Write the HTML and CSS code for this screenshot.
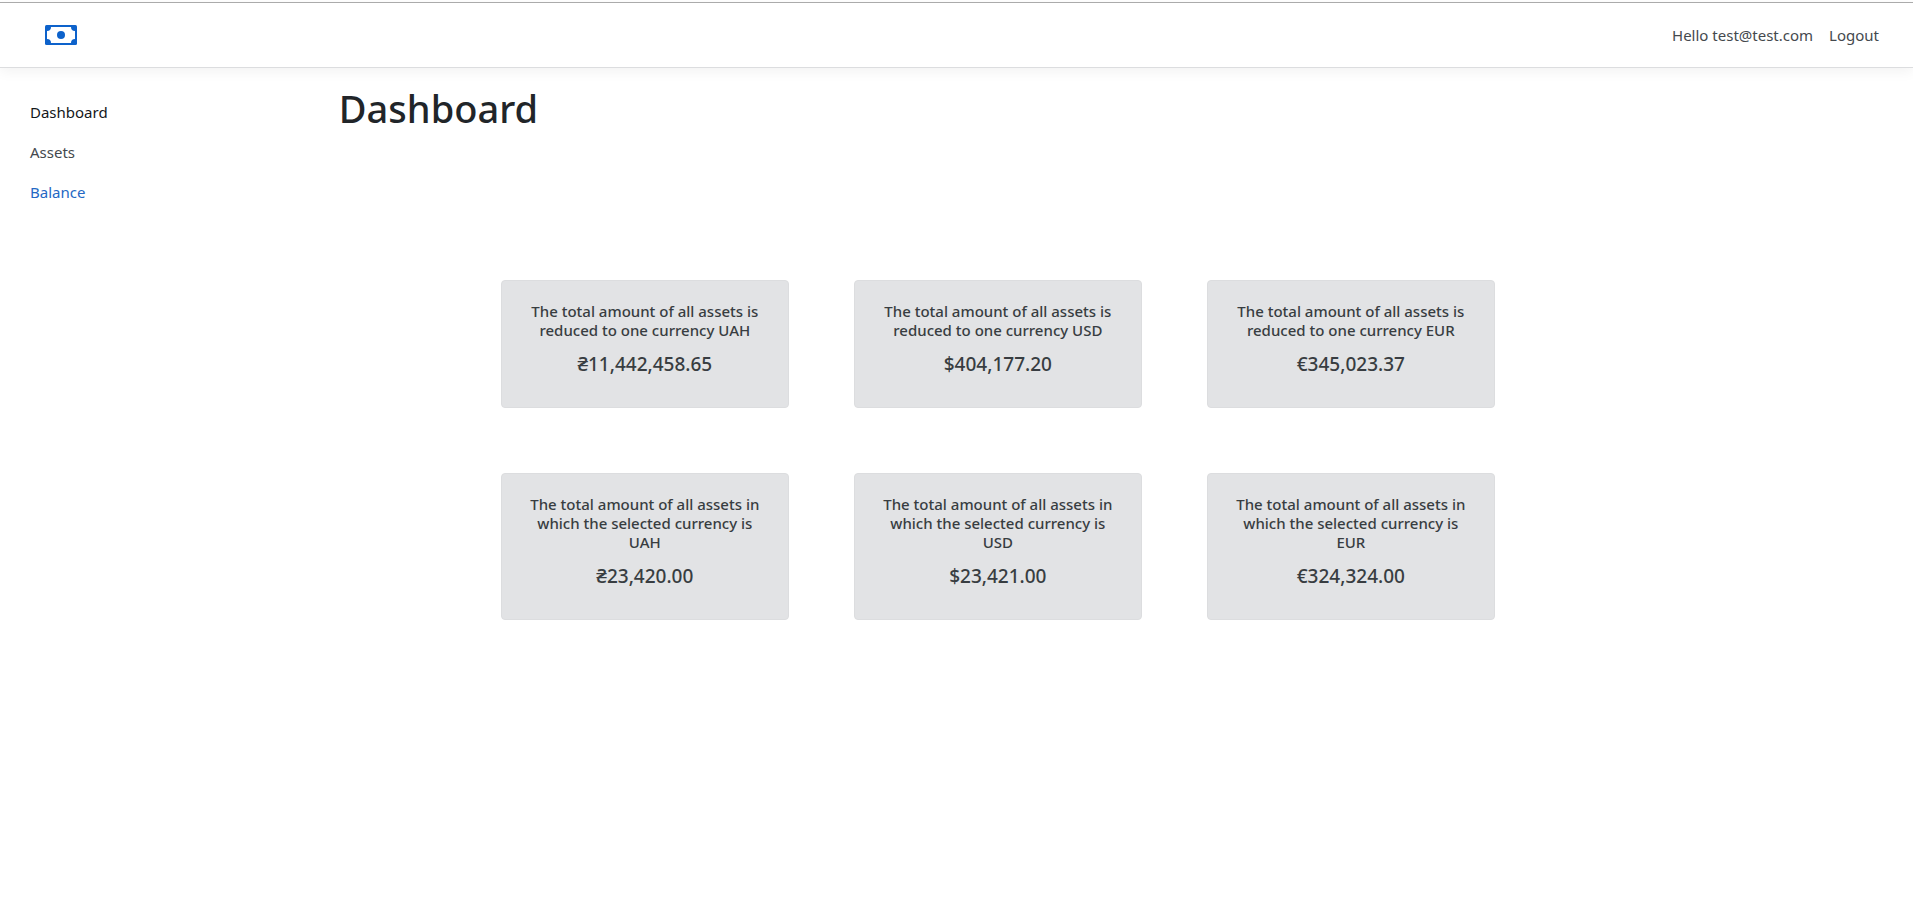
FILE: index.html
```html
<!DOCTYPE html>
<html lang="en">
<head>
<meta charset="utf-8">
<meta name="viewport" content="width=device-width, initial-scale=1">
<title>Dashboard</title>
<link rel="stylesheet" href="styles.css">
</head>
<body>
<header class="topbar">
  <a class="brand" href="#" aria-label="Home">
    <svg class="brand-icon" viewBox="0 0 32 20" aria-hidden="true">
      <rect width="32" height="20" rx="1.5" fill="#0d62cb"/>
      <path d="M6 2h20a4 4 0 0 0 4 4v8a4 4 0 0 0-4 4H6a4 4 0 0 0-4-4V6a4 4 0 0 0 4-4z" fill="#fff"/>
      <circle cx="16" cy="10" r="4" fill="#0d62cb"/>
    </svg>
  </a>
  <nav class="account" aria-label="Account">
    <a href="#">Hello test@test.com</a>
    <a href="#">Logout</a>
  </nav>
</header>
<div class="layout">
  <nav class="sidebar" aria-label="Main">
    <a class="current" href="#">Dashboard</a>
    <a href="#">Assets</a>
    <a class="accent" href="#">Balance</a>
  </nav>
  <main class="content">
    <h1>Dashboard</h1>
    <div class="cards">
      <section class="card">
        <h2>The total amount of all assets is reduced to one currency UAH</h2>
        <p>₴11,442,458.65</p>
      </section>
      <section class="card">
        <h2>The total amount of all assets is reduced to one currency USD</h2>
        <p>$404,177.20</p>
      </section>
      <section class="card">
        <h2>The total amount of all assets is reduced to one currency EUR</h2>
        <p>€345,023.37</p>
      </section>
      <section class="card">
        <h2>The total amount of all assets in which the selected currency is UAH</h2>
        <p>₴23,420.00</p>
      </section>
      <section class="card">
        <h2>The total amount of all assets in which the selected currency is USD</h2>
        <p>$23,421.00</p>
      </section>
      <section class="card">
        <h2>The total amount of all assets in which the selected currency is EUR</h2>
        <p>€324,324.00</p>
      </section>
    </div>
  </main>
</div>
</body>
</html>
```

FILE: styles.css
```css
* { box-sizing: border-box; }

body {
  margin: 0;
  padding-top: 2px;
  background: #fff;
  color: #212529;
  font-family: "Noto Sans", "Open Sans", sans-serif;
  font-size: 15px;
  line-height: 24px;
}

a { color: #44494e; text-decoration: none; }

.topbar {
  display: flex;
  align-items: center;
  justify-content: space-between;
  height: 66px;
  padding: 0 34px 0 45px;
  border-top: 1px solid #ababab;
  border-bottom: 1px solid #dcdddf;
  box-shadow: 0 4px 12px rgba(0, 0, 0, 0.05);
}

.brand { display: flex; }
.brand-icon { width: 32px; height: 20px; }

.account { display: flex; gap: 16px; }

.layout { display: flex; }

.sidebar {
  display: flex;
  flex: 0 0 calc(100% / 6);
  flex-direction: column;
  gap: 16px;
  padding: 32px 30px;
}
.sidebar .current { color: #14171a; }
.sidebar .accent { color: #2468c4; }

.content { flex: 1; padding: 16px 20px; }

h1 {
  margin: 0;
  font-size: 38px;
  font-weight: 500;
  line-height: 48px;
}

.cards {
  display: grid;
  grid-template-columns: repeat(auto-fit, 288px);
  gap: 65px;
  justify-content: center;
  max-width: 1318px;
  margin-top: 148px;
}

.card {
  padding: 21px 20px 31px;
  border: 1px solid #dcdddf;
  border-radius: 4px;
  background: #e2e3e5;
  color: #383d41;
  text-align: center;
}
.card h2 {
  margin: 0 0 12px;
  font-size: 15px;
  font-weight: 500;
  line-height: 19px;
}
.card p {
  margin: 0;
  font-size: 19px;
  font-weight: 500;
  line-height: 24px;
}
```
